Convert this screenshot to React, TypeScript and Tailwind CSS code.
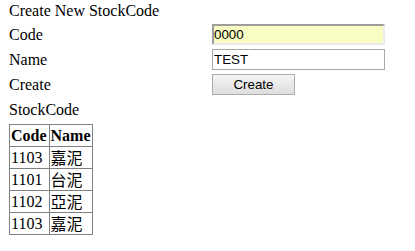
import React from "react";

const stocks = [
  { code: "1103", name: "嘉泥" },
  { code: "1101", name: "台泥" },
  { code: "1102", name: "亞泥" },
  { code: "1103", name: "嘉泥" },
];

const serif = "font-['Liberation_Serif','Times_New_Roman',serif]";
const sans = "font-['Liberation_Sans',Arial,sans-serif]";

export default function App() {
  return (
    <div className={`min-h-[251px] w-[415px] bg-white pl-[9px] text-[16px] text-black ${serif}`}>
      <div className="h-[22px] leading-[22px]">Create New StockCode</div>
      <div className="flex h-[25px] items-center">
        <span className="w-[203px] leading-[25px]">Code</span>
        <input
          readOnly
          value="0000"
          className={`box-border h-[21px] w-[173px] border-2 border-t-[#9d9d9d] border-l-[#9d9d9d] border-r-[#ebebeb] border-b-[#ebebeb] bg-[#fafdc3] px-0 text-[13.33px] leading-[17px] outline-none ${sans}`}
        />
      </div>
      <div className="flex h-[25px] items-center">
        <span className="w-[203px] leading-[25px]">Name</span>
        <input
          readOnly
          value="TEST"
          className={`box-border h-[21px] w-[173px] border border-[#a9a9a9] bg-white px-px text-[13.33px] leading-[19px] outline-none ${sans}`}
        />
      </div>
      <div className="flex h-[25px] items-center">
        <span className="w-[203px] leading-[25px]">Create</span>
        <button
          type="button"
          className={`box-border h-[21px] w-[83px] border border-[#adadad] bg-gradient-to-b from-[#f4f4f4] to-[#dedede] text-[13.33px] leading-[19px] ${sans}`}
        >
          Create
        </button>
      </div>
      <div className="h-[26px] leading-[26px]">StockCode</div>
      <table className="mt-px border-collapse border border-[#808080]">
        <thead>
          <tr>
            <th className="border border-[#808080] py-px pl-px pr-[2px] text-left leading-[19px] font-bold">Code</th>
            <th className="border border-[#808080] p-px text-left leading-[19px] font-bold">Name</th>
          </tr>
        </thead>
        <tbody>
          {stocks.map((s, i) => (
            <tr key={i}>
              <td className="border border-[#808080] py-px pl-px pr-[2px] leading-[19px]">{s.code}</td>
              <td className="border border-[#808080] p-px leading-[19px] font-['Noto_Sans_CJK_TC',sans-serif]">
                {s.name}
              </td>
            </tr>
          ))}
        </tbody>
      </table>
    </div>
  );
}
